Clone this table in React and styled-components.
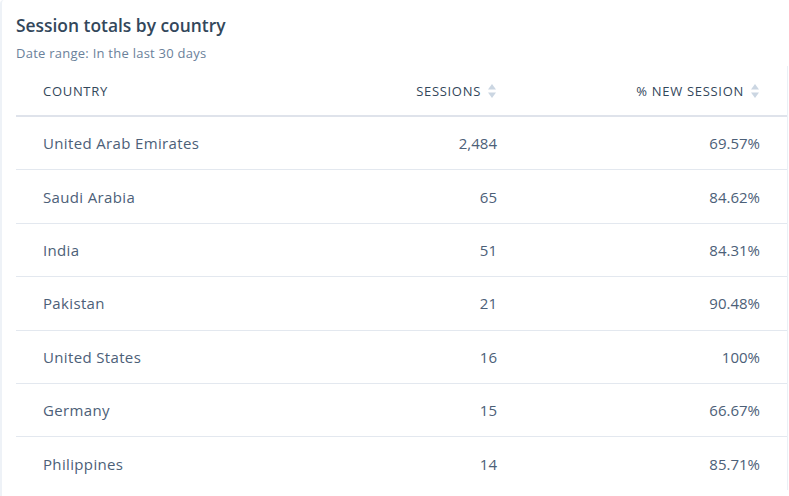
import React from 'react';
import styled, { createGlobalStyle } from 'styled-components';

const GlobalStyle = createGlobalStyle`
    body {
        margin: 0;
        background: #ffffff;
        font-family: "Open Sans", "Lato", sans-serif;
    }
`;

const Card = styled.div`
    width: 789px;
    height: 496px;
    box-sizing: border-box;
    border-left: 2px solid #eef2f7;
    border-top-left-radius: 4px;
    padding: 12px 0 0 14px;
    overflow: hidden;
`;

const Title = styled.h2`
    margin: 0;
    font-size: 17.4px;
    font-weight: 600;
    color: #33475b;
    line-height: 26px;
`;

const Subtitle = styled.div`
    margin-top: 7px;
    font-size: 13px;
    letter-spacing: 0.25px;
    color: #6b819a;
    line-height: 16px;
`;

const TableWrap = styled.div`
    margin-top: 5px;
    width: 771px;
    border-right: 1px solid #eaf0f6;
`;

const Table = styled.table`
    width: 100%;
    border-collapse: collapse;
    table-layout: fixed;
`;

const HeadCell = styled.th`
    height: 49px;
    padding: 0 27px 0 27px;
    font-size: 13px;
    letter-spacing: 0.7px;
    font-weight: 400;
    color: #33475b;
    text-transform: uppercase;
    text-align: ${p => (p.$right ? 'right' : 'left')};
    border-bottom: 2px solid #dfe3eb;
    white-space: nowrap;
`;

const HeadInner = styled.span`
    display: inline-flex;
    align-items: center;
    gap: 6px;
`;

const Cell = styled.td`
    height: 52.4px;
    padding: 0 27px 0 27px;
    font-size: 15px;
    letter-spacing: ${p => (p.$right ? '0' : '0.35px')};
    color: #4c6078;
    text-align: ${p => (p.$right ? 'right' : 'left')};
    border-bottom: 1px solid #e3e8ef;
`;

const Row = styled.tr`
    &:last-child td {
        border-bottom: none;
    }
`;

function SortIcon() {
    return (
        <svg width="10" height="16" viewBox="0 0 10 16">
            <path d="M5 1 L9 6.5 H1 Z" fill="#cbd6e2" />
            <path d="M5 15 L9 9.5 H1 Z" fill="#cbd6e2" />
        </svg>
    );
}

const rows = [
    { country: 'United Arab Emirates', sessions: '2,484', pct: '69.57%' },
    { country: 'Saudi Arabia', sessions: '65', pct: '84.62%' },
    { country: 'India', sessions: '51', pct: '84.31%' },
    { country: 'Pakistan', sessions: '21', pct: '90.48%' },
    { country: 'United States', sessions: '16', pct: '100%' },
    { country: 'Germany', sessions: '15', pct: '66.67%' },
    { country: 'Philippines', sessions: '14', pct: '85.71%' },
];

export default function App() {
    return (
        <>
            <GlobalStyle />
            <Card>
                <Title>Session totals by country</Title>
                <Subtitle>Date range: In the last 30 days</Subtitle>
                <TableWrap>
                    <Table>
                        <colgroup>
                            <col style={{ width: '300px' }} />
                            <col style={{ width: '208px' }} />
                            <col />
                        </colgroup>
                        <thead>
                            <tr>
                                <HeadCell>Country</HeadCell>
                                <HeadCell $right>
                                    <HeadInner>Sessions <SortIcon /></HeadInner>
                                </HeadCell>
                                <HeadCell $right>
                                    <HeadInner>% New Session <SortIcon /></HeadInner>
                                </HeadCell>
                            </tr>
                        </thead>
                        <tbody>
                            {rows.map((r, i) => (
                                <Row key={i}>
                                    <Cell>{r.country}</Cell>
                                    <Cell $right>{r.sessions}</Cell>
                                    <Cell $right>{r.pct}</Cell>
                                </Row>
                            ))}
                        </tbody>
                    </Table>
                </TableWrap>
            </Card>
        </>
    );
}
